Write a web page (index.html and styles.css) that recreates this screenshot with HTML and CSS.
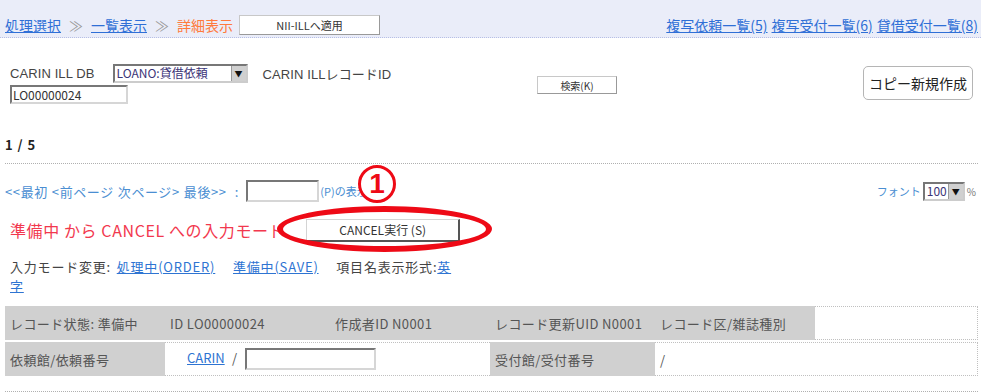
FILE: index.html
```html
<!DOCTYPE html>
<html lang="ja">
<head>
<meta charset="utf-8">
<title>詳細表示</title>
<link rel="stylesheet" href="styles.css">
</head>
<body>
<div class="page">
  <div class="topbar">
    <div class="crumbs">
      <a href="#" class="lnk">処理選択</a>
      <span class="sep">≫</span>
      <a href="#" class="lnk">一覧表示</a>
      <span class="sep">≫</span>
      <span class="cur">詳細表示</span>
      <button class="btn apply">NII-ILLへ適用</button>
    </div>
    <div class="lists">
      <a href="#" class="lnk">複写依頼一覧(5)</a>
      <a href="#" class="lnk">複写受付一覧(6)</a>
      <a href="#" class="lnk">貸借受付一覧(8)</a>
    </div>
  </div>

  <div class="search">
    <div class="search-left">
      <div class="db-row">
        <span class="lbl">CARIN ILL DB</span>
        <span class="select db-select"><span class="sel-text">LOANO:貸借依頼</span><span class="sel-arrow">▼</span></span>
        <span class="lbl">CARIN ILLレコードID</span>
      </div>
      <span class="field id-field">LO00000024</span>
    </div>
    <button class="btn search-btn">検索(K)</button>
    <button class="btn copy-btn">コピー新規作成</button>
  </div>

  <div class="count">1 / 5</div>
  <div class="dotline"></div>

  <div class="pager">
    <div class="pager-left">
      <a href="#" class="plnk">&lt;&lt;最初</a>
      <a href="#" class="plnk">&lt;前ページ</a>
      <a href="#" class="plnk">次ページ&gt;</a>
      <a href="#" class="plnk">最後&gt;&gt;</a>
      <span class="colon">:</span>
      <span class="field page-field"></span>
      <a href="#" class="plnk small">(P)の表示(G)</a>
    </div>
    <div class="fontsel">
      <span class="plnk small">フォント</span>
      <span class="select font-select"><span class="sel-text">100</span><span class="sel-arrow">▼</span></span>
      <span class="pct">%</span>
    </div>
  </div>

  <div class="mode">
    <span class="mode-text">準備中 から CANCEL への入力モード</span>
    <button class="btn cancel-btn">CANCEL実行 (S)</button>
  </div>

  <div class="modechange">
    <span>入力モード変更:</span>
    <a href="#" class="mlnk">処理中(ORDER)</a>
    <a href="#" class="mlnk">準備中(SAVE)</a>
    <span>項目名表示形式:</span><a href="#" class="mlnk">英<br>字</a>
  </div>

  <table class="record">
    <colgroup>
      <col class="c1"><col class="c2"><col class="c3"><col class="c4"><col class="c5"><col class="c6">
    </colgroup>
    <tr>
      <td class="g">レコード状態: 準備中</td>
      <td class="g">ID LO00000024</td>
      <td class="g">作成者ID N0001</td>
      <td class="g">レコード更新UID N0001</td>
      <td class="g">レコード区/雑誌種別</td>
      <td class="w"></td>
    </tr>
    <tr>
      <td class="g">依頼館/依頼番号</td>
      <td class="w" colspan="2"><a href="#" class="mlnk carin">CARIN</a> / <span class="field req-field"></span></td>
      <td class="g">受付館/受付番号</td>
      <td class="w" colspan="2">/</td>
    </tr>
  </table>
  <div class="dotline bottom"></div>

  <div class="ellipse"></div>
  <div class="marker">1</div>
</div>
</body>
</html>
```

FILE: styles.css
```css
html, body {
  margin: 0;
  padding: 0;
  background: #ffffff;
}
body {
  font-family: "Noto Sans CJK JP", "Liberation Sans", sans-serif;
  font-size: 13px;
  color: #333;
}
.page {
  position: relative;
  width: 981px;
  height: 392px;
  overflow: hidden;
}
.topbar {
  height: 38px;
  box-sizing: border-box;
  padding: 13px 3px 0 5px;
  background: #eaedf9;
  border-bottom: 1px dotted #b7bfe6;
  display: flex;
  justify-content: space-between;
  align-items: center;
}
.crumbs, .lists {
  display: flex;
  align-items: center;
}
.lnk {
  color: #2f6fd6;
  font-size: 14px;
  text-decoration: underline;
}
.lists .lnk { margin-left: 4px; }
.sep {
  color: #9a9a9a;
  font-size: 14px;
  margin: 0 8px;
}
.cur {
  color: #ff7a3c;
  font-size: 14px;
}
.btn {
  font-family: "Noto Sans CJK JP", "Liberation Sans", sans-serif;
  background: #fff;
  color: #333;
  padding: 0;
  cursor: pointer;
}
.apply {
  margin-left: 6px;
  width: 141px;
  height: 20px;
  font-size: 11px;
  border: 1px solid #c8c8c8;
  border-right-color: #999;
  border-bottom-color: #999;
}
.search {
  display: flex;
  align-items: flex-start;
  padding: 26px 8px 0 10px;
  height: 68px;
  box-sizing: border-box;
}
.search-left {
  width: 527px;
}
.db-row {
  display: flex;
  align-items: center;
  height: 19px;
}
.lbl {
  font-family: "Liberation Sans", "Noto Sans CJK JP", sans-serif;
  font-size: 13px;
  color: #444;
  letter-spacing: 0.1px;
}
.select {
  display: inline-flex;
  align-items: stretch;
  border: 2px solid #777;
  border-right-color: #ccc;
  border-bottom-color: #ccc;
  background: #fff;
  box-sizing: border-box;
}
.sel-text {
  flex: 1;
  color: #3b3477;
  padding-left: 2px;
  line-height: 14px;
}
.sel-arrow {
  width: 14px;
  background: #d0d0d0;
  border-left: 1px solid #999;
  font-size: 8px;
  color: #111;
  display: flex;
  align-items: center;
  justify-content: center;
}
.db-select {
  width: 135px;
  height: 19px;
  margin: 0 15px 0 18px;
  font-size: 12px;
}
.field {
  display: inline-block;
  box-sizing: border-box;
  border: 2px solid #777;
  border-right-color: #d6d6d6;
  border-bottom-color: #d6d6d6;
  background: #fff;
  vertical-align: middle;
}
.id-field {
  width: 118px;
  height: 19px;
  font-size: 12px;
  line-height: 15px;
  padding-left: 1px;
  color: #333;
  margin-top: 1px;
}
.search-btn {
  margin-top: 12px;
  width: 80px;
  height: 18px;
  font-size: 10px;
  border: 1px solid #c8c8c8;
  border-right-color: #999;
  border-bottom-color: #999;
}
.copy-btn {
  margin-left: auto;
  margin-top: 2px;
  width: 110px;
  height: 34px;
  font-size: 14px;
  color: #222;
  border: 1px solid #b5b5b5;
  border-radius: 5px;
}
.count {
  padding: 28px 0 0 5px;
  font-size: 13px;
  font-weight: bold;
  color: #222;
  height: 22px;
  line-height: 22px;
  word-spacing: 2px;
}
.dotline {
  margin: 7px 3px 0 5px;
  border-top: 1px dotted #b0b0b0;
}
.dotline.bottom {
  margin-top: 13px;
}
.pager {
  display: flex;
  justify-content: space-between;
  align-items: center;
  padding: 16px 5px 0 5px;
  height: 22px;
}
.pager-left {
  display: flex;
  align-items: center;
}
.plnk {
  color: #4a8ed2;
  text-decoration: none;
  font-size: 13px;
  margin-right: 4px;
  letter-spacing: 0.6px;
}
.plnk.small {
  font-size: 11px;
  margin-right: 0;
  letter-spacing: 0;
}
.colon {
  color: #4a8ed2;
  margin: 0 8px 0 4px;
}
.page-field {
  width: 73px;
  height: 22px;
  margin-right: 1px;
}
.fontsel {
  display: flex;
  align-items: center;
}
.font-select {
  width: 42px;
  height: 19px;
  margin-left: 2px;
  font-size: 12px;
}
.pct {
  font-size: 10px;
  color: #777;
  margin-left: 2px;
}
.mode {
  display: flex;
  align-items: center;
  padding: 16px 0 0 10px;
  height: 24px;
}
.mode-text {
  color: #f2384e;
  font-size: 16px;
  letter-spacing: 0.6px;
}
.cancel-btn {
  margin-left: 21px;
  width: 154px;
  height: 23px;
  font-size: 12px;
  color: #333;
  border: 1px solid #d4d4d4;
  border-right: 2px solid #555;
  border-bottom: 2px solid #555;
}
.modechange {
  width: 500px;
  padding: 15px 0 0 10px;
  font-size: 13px;
  line-height: 19px;
  color: #444;
  letter-spacing: 0.8px;
}
.mlnk {
  color: #2e74d2;
  text-decoration: underline;
  margin-right: 14px;
}
.modechange span + .mlnk {
  margin-left: 2px;
}
.modechange .mlnk:last-child {
  margin: 0;
}
.record {
  margin: 9px 0 0 5px;
  width: 973px;
  table-layout: fixed;
  border-collapse: separate;
  border-spacing: 0 2px;
  font-size: 13px;
  color: #555;
}
.c1 { width: 160px; }
.c2 { width: 165px; }
.c3 { width: 160px; }
.c4 { width: 165px; }
.c5 { width: 160px; }
.c6 { width: 163px; }
.record td {
  height: 34px;
  padding: 0 0 0 5px;
  box-sizing: border-box;
  white-space: nowrap;
  letter-spacing: 0.4px;
}
.record td.g {
  background: #d0d0d0;
}
.record td.w {
  background: #fff;
  border-top: 1px dotted #c0c0c0;
  border-bottom: 1px dotted #c0c0c0;
}
.record td.w:last-child {
  border-right: 1px dotted #c0c0c0;
}
.carin {
  margin: 0 4px 0 17px;
  letter-spacing: 0;
}
.req-field {
  width: 131px;
  height: 22px;
  margin-left: 4px;
}
.ellipse {
  position: absolute;
  left: 277px;
  top: 206px;
  width: 215px;
  height: 46px;
  box-sizing: border-box;
  border: 6px solid #ee0a16;
  border-radius: 50%;
}
.marker {
  position: absolute;
  left: 358px;
  top: 165px;
  width: 38px;
  height: 38px;
  box-sizing: border-box;
  border: 3px solid #ee0a16;
  border-radius: 50%;
  background: #fff;
  color: #ee0a16;
  font-family: "Liberation Sans", sans-serif;
  font-weight: bold;
  font-size: 28px;
  line-height: 32px;
  text-align: center;
}
```
